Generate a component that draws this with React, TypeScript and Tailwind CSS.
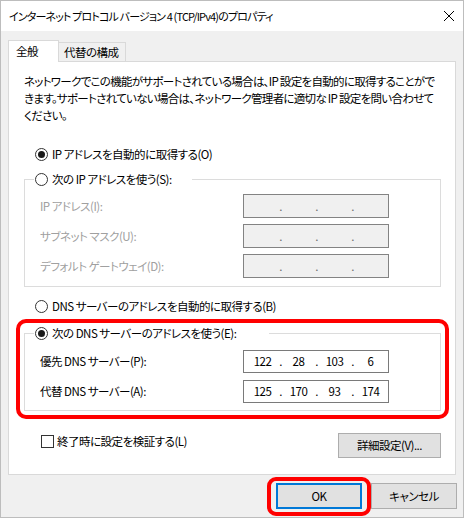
import React from 'react';

function Radio({ checked }: { checked?: boolean }) {
  return (
    <span className="flex h-[13px] w-[13px] shrink-0 items-center justify-center rounded-full border border-[#333333] bg-white">
      {checked && <span className="h-[7px] w-[7px] rounded-full bg-[#1a1a1a]" />}
    </span>
  );
}

function IpBox({ parts, disabled }: { parts: string[]; disabled?: boolean }) {
  return (
    <div
      className={
        disabled
          ? 'flex h-[24px] w-[146px] items-center border border-[#838383] bg-[#f0f0f0] pl-[3px] text-[#6d6d6d]'
          : 'flex h-[23px] w-[146px] items-center border border-[#7a7a7a] bg-white pl-[3px] text-black'
      }
    >
      {parts.map((p, i) => (
        <React.Fragment key={i}>
          {i > 0 && <span className="w-[5px] text-center">.</span>}
          <span className="w-[31px] text-center">{p}</span>
        </React.Fragment>
      ))}
    </div>
  );
}

export default function App() {
  const ipRows = ['IP アドレス(I):', 'サブネット マスク(U):', 'デフォルト ゲートウェイ(D):'];

  return (
    <div className="h-[518px] w-[465px] bg-white font-['Noto_Sans_CJK_JP',sans-serif] text-[11.5px] leading-[17px] tracking-[-0.5px] text-black [font-feature-settings:'palt']">
      <div className="flex h-[518px] w-[464px] flex-col border border-[#bdbdbd]">
        {/* Title bar */}
        <div className="flex h-[30px] items-center justify-between bg-white pl-[8px] pr-[9px]">
          <span className="text-[11px] tracking-[-0.85px]">インターネット プロトコル バージョン 4 (TCP/IPv4)のプロパティ</span>
          <svg width="10" height="10" viewBox="0 0 10 10" className="shrink-0">
            <path d="M0 0L10 10M10 0L0 10" stroke="#000" strokeWidth="1" fill="none" />
          </svg>
        </div>

        {/* Body */}
        <div className="flex flex-1 flex-col bg-[#f0f0f0] px-[7px] pt-[9px]">
          {/* Tabs */}
          <div className="flex h-[21px] items-end">
            <div className="relative z-10 mb-[-1px] flex h-[22px] w-[51px] items-center border-x border-t border-[#d9d9d9] bg-white pb-[1px] pl-[7px]">
              全般
            </div>
            <div className="flex h-[19px] w-[67px] items-center border-r border-t border-[#d9d9d9] bg-[#f0f0f0] pl-[5px]">
              代替の構成
            </div>
          </div>

          {/* Panel */}
          <div className="flex h-[414px] w-[448px] flex-col border border-[#d9d9d9] bg-white">
            <div className="whitespace-nowrap pl-[15px] pt-[11px] tracking-[-0.7px]">
              <div>ネットワークでこの機能がサポートされている場合は、IP 設定を自動的に取得することがで</div>
              <div>きます。サポートされていない場合は、ネットワーク管理者に適切な IP 設定を問い合わせて</div>
              <div>ください。</div>
            </div>

            <div className="ml-[26px] mt-[22px] flex h-[17px] items-center gap-[4px]">
              <Radio checked />
              <span>IP アドレスを自動的に取得する(O)</span>
            </div>

            <fieldset className="ml-[15px] mt-[8px] w-[417px] border border-[#dcdcdc] pb-[8px] pt-[6px]">
              <legend className="ml-[9px] flex h-[17px] items-center gap-[4px] pl-[1px] pr-[20px]">
                <Radio />
                <span>次の IP アドレスを使う(S):</span>
              </legend>
              <div className="flex flex-col gap-[6px] pl-[15px]">
                {ipRows.map((label) => (
                  <div key={label} className="flex items-center">
                    <span className="w-[203px] text-[#a0a0a0]">{label}</span>
                    <IpBox parts={['', '', '', '']} disabled />
                  </div>
                ))}
              </div>
            </fieldset>

            <div className="ml-[26px] mt-[11px] flex h-[17px] items-center gap-[4px]">
              <Radio />
              <span>DNS サーバーのアドレスを自動的に取得する(B)</span>
            </div>

            <div className="relative ml-[15px] mt-[10px] w-[417px]">
              <fieldset className="w-[417px] border border-[#dcdcdc] pb-[7px] pt-[8px]">
                <legend className="ml-[9px] flex h-[17px] items-center gap-[4px] pl-[1px] pr-[33px]">
                  <Radio checked />
                  <span>次の DNS サーバーのアドレスを使う(E):</span>
                </legend>
                <div className="flex flex-col gap-[7px] pl-[15px]">
                  <div className="flex items-center">
                    <span className="w-[203px]">優先 DNS サーバー(P):</span>
                    <IpBox parts={['122', '28', '103', '6']} />
                  </div>
                  <div className="flex items-center">
                    <span className="w-[203px]">代替 DNS サーバー(A):</span>
                    <IpBox parts={['125', '170', '93', '174']} />
                  </div>
                </div>
              </fieldset>
              <div className="pointer-events-none absolute -bottom-[8px] -left-[8px] -right-[8px] -top-[6px] rounded-[10px] border-[4px] border-[#ff0000]" />
            </div>

            <div className="mt-[22px] flex items-start justify-between pl-[32px] pr-[14px]">
              <div className="flex h-[17px] items-center gap-[3px]">
                <span className="h-[13px] w-[13px] shrink-0 border border-[#333333] bg-white" />
                <span>終了時に設定を検証する(L)</span>
              </div>
              <div className="flex h-[25px] w-[103px] items-center justify-center border border-[#adadad] bg-[#e1e1e1]">
                詳細設定(V)...
              </div>
            </div>
          </div>

          {/* Dialog buttons */}
          <div className="mr-[-1px] mt-[8px] flex justify-end gap-[9px]">
            <div className="relative">
              <div className="flex h-[26px] w-[86px] items-center justify-center border-2 border-[#0078d7] bg-[#e1e1e1]">
                OK
              </div>
              <div className="pointer-events-none absolute -bottom-[7px] -left-[9px] -right-[9px] -top-[6px] rounded-[9px] border-[4px] border-[#ff0000]" />
            </div>
            <div className="flex h-[26px] w-[86px] items-center justify-center border border-[#adadad] bg-[#e1e1e1]">
              キャンセル
            </div>
          </div>
        </div>
      </div>
    </div>
  );
}
